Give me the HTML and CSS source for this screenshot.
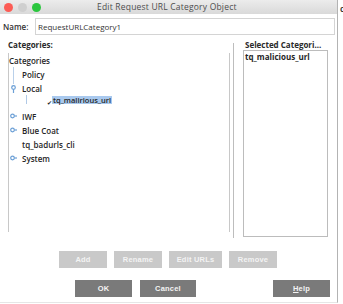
FILE: index.html
```html
<!DOCTYPE html>
<html lang="en">
<head>
    <meta charset="UTF-8">
    <title>Edit Request URL Category Object</title>
    <link rel="stylesheet" href="styles.css">
</head>
<body>
    <div class="window">
        <div class="titlebar">
            <div class="lights">
                <span class="light red"></span>
                <span class="light idle"></span>
                <span class="light green"></span>
            </div>
            <div class="title">Edit Request URL Category Object</div>
        </div>

        <div class="name-row">
            <label class="name-label">Name:</label>
            <div class="name-input">RequestURLCategory1</div>
        </div>

        <div class="main">
            <div class="left-col">
                <div class="col-label">Categories:</div>
                <div class="tree">
                    <div class="tree-guide"></div>
                    <div class="node root">Categories</div>
                    <div class="node">Policy</div>
                    <div class="node">
                        <svg class="handle" width="7" height="8" viewBox="0 0 7 8"><circle cx="3.5" cy="2.5" r="1.8" fill="none" stroke="#6b9fd6" stroke-width="1.2"/><line x1="3.5" y1="4.3" x2="3.5" y2="8" stroke="#6b9fd6" stroke-width="1.2"/></svg>
                        Local
                    </div>
                    <div class="node child">
                        <span class="child-guide"></span>
                        <span class="check">✔</span>
                        <span class="selected">tq_malirious_url</span>
                    </div>
                    <div class="node">
                        <svg class="handle" width="7" height="6" viewBox="0 0 7 6"><circle cx="2.5" cy="3" r="1.8" fill="none" stroke="#6b9fd6" stroke-width="1.2"/><line x1="4.3" y1="3" x2="7" y2="3" stroke="#6b9fd6" stroke-width="1.2"/></svg>
                        IWF
                    </div>
                    <div class="node">
                        <svg class="handle" width="7" height="6" viewBox="0 0 7 6"><circle cx="2.5" cy="3" r="1.8" fill="none" stroke="#6b9fd6" stroke-width="1.2"/><line x1="4.3" y1="3" x2="7" y2="3" stroke="#6b9fd6" stroke-width="1.2"/></svg>
                        Blue Coat
                    </div>
                    <div class="node">tq_badurls_cli</div>
                    <div class="node">
                        <svg class="handle" width="7" height="6" viewBox="0 0 7 6"><circle cx="2.5" cy="3" r="1.8" fill="none" stroke="#6b9fd6" stroke-width="1.2"/><line x1="4.3" y1="3" x2="7" y2="3" stroke="#6b9fd6" stroke-width="1.2"/></svg>
                        System
                    </div>
                </div>
            </div>

            <div class="divider"></div>

            <div class="right-col">
                <div class="col-label">Selected Categori...</div>
                <div class="list">
                    <div class="list-item">tq_malicious_url</div>
                </div>
            </div>
        </div>

        <div class="actions">
            <button class="btn light-btn add">Add</button>
            <button class="btn light-btn rename">Rename</button>
            <button class="btn light-btn edit">Edit URLs</button>
            <button class="btn light-btn remove">Remove</button>
        </div>

        <div class="footer">
            <button class="btn dark-btn ok">OK</button>
            <button class="btn dark-btn cancel">Cancel</button>
            <button class="btn dark-btn help"><u>H</u>elp</button>
        </div>
    </div>
    <div class="offscreen">c</div>
</body>
</html>
```

FILE: styles.css
```css
body {
    margin: 0;
    width: 343px;
    height: 304px;
    overflow: hidden;
    background: white;
    font-family: "Open Sans", "DejaVu Sans", sans-serif;
    display: flex;
}

.window {
    width: 337px;
    height: 302px;
    border-right: 1px solid #b3b3b3;
    border-bottom: 1px solid #e6e6e6;
    display: flex;
    flex-direction: column;
    flex-shrink: 0;
}

.offscreen {
    font-size: 9px;
    font-weight: 600;
    color: #222;
    margin: 4px 0 0 2px;
    line-height: 10px;
}

.titlebar {
    height: 14px;
    background: linear-gradient(#ececec, #d9d9d9);
    display: flex;
    align-items: center;
    position: relative;
}

.lights {
    display: flex;
    gap: 5px;
    padding-left: 4px;
}

.light {
    width: 9px;
    height: 9px;
    border-radius: 50%;
}

.light.red { background: #fc5c55; }
.light.idle { background: #cfcfcf; }
.light.green { background: #2bc63e; }

.title {
    position: absolute;
    left: 97px;
    top: 0;
    line-height: 14px;
    font-size: 8.5px;
    color: #4d4d4d;
    letter-spacing: 0.2px;
}

.name-row {
    margin-top: 4px;
    height: 17px;
    display: flex;
    align-items: center;
    padding-left: 3px;
}

.name-label {
    width: 32px;
    font-size: 8px;
    font-weight: 600;
    color: #333;
}

.name-input {
    width: 296px;
    height: 15px;
    border: 1px solid #d4d4d4;
    font-size: 8px;
    line-height: 15px;
    color: #333;
    padding-left: 2px;
}

.main {
    margin-top: 5px;
    display: flex;
    padding-left: 8px;
    height: 198px;
}

.left-col {
    width: 222px;
}

.col-label {
    font-size: 8px;
    font-weight: 700;
    color: #2a2a2a;
    line-height: 10px;
}

.left-col .col-label {
    height: 13px;
}

.tree {
    position: relative;
    height: 179px;
    border-left: 1px solid #c8c8c8;
    border-right: 1px solid #c8c8c8;
}

.tree-guide {
    position: absolute;
    left: 4px;
    top: 14px;
    width: 1px;
    height: 17px;
    background: #b9d0ea;
}

.node {
    height: 14px;
    display: flex;
    align-items: center;
    padding-left: 13px;
    font-size: 8px;
    font-weight: 600;
    color: #262626;
    position: relative;
}

.node.root {
    padding-left: 0;
}

.handle {
    position: absolute;
    left: 1px;
    top: 4px;
}

.node.child {
    padding-left: 17px;
}

.child-guide {
    width: 1px;
    height: 9px;
    background: #b0c9e6;
    margin-right: 20px;
    align-self: flex-start;
}

.check {
    font-size: 6px;
    color: #222;
    margin-top: 2px;
}

.selected {
    background: #a9c9ee;
    padding: 0 1px;
    line-height: 8px;
    font-size: 7.5px;
    align-self: flex-start;
    margin-top: 1px;
}

.divider {
    width: 1px;
    margin-left: 3px;
    margin-top: 3px;
    height: 195px;
    background: #bdbdbd;
}

.right-col {
    margin-left: 9px;
    width: 85px;
}

.right-col .col-label {
    padding-left: 2px;
}

.list {
    height: 185px;
    border: 1px solid #bcbcbc;
}

.list-item {
    font-size: 8px;
    font-weight: 700;
    color: #262626;
    padding-left: 1px;
    line-height: 11px;
}

.btn {
    border: none;
    padding: 0;
    font-family: "Liberation Sans", Arial, sans-serif;
    font-size: 7.5px;
    font-weight: 700;
    color: #f4f4f4;
    letter-spacing: 0.2px;
}

.actions {
    margin-top: 13px;
    display: flex;
    gap: 7px;
    padding-left: 59px;
}

.light-btn {
    height: 17px;
    background: #c9c9c9;
    width: 48px;
}

.light-btn.edit {
    width: 53px;
}

.footer {
    margin-top: 12px;
    display: flex;
    padding-left: 75px;
}

.dark-btn {
    height: 17px;
    width: 57px;
    background: #7a7a7a;
}

.dark-btn.cancel {
    margin-left: 8px;
    width: 56px;
}

.dark-btn.help {
    margin-left: 77px;
}
```
